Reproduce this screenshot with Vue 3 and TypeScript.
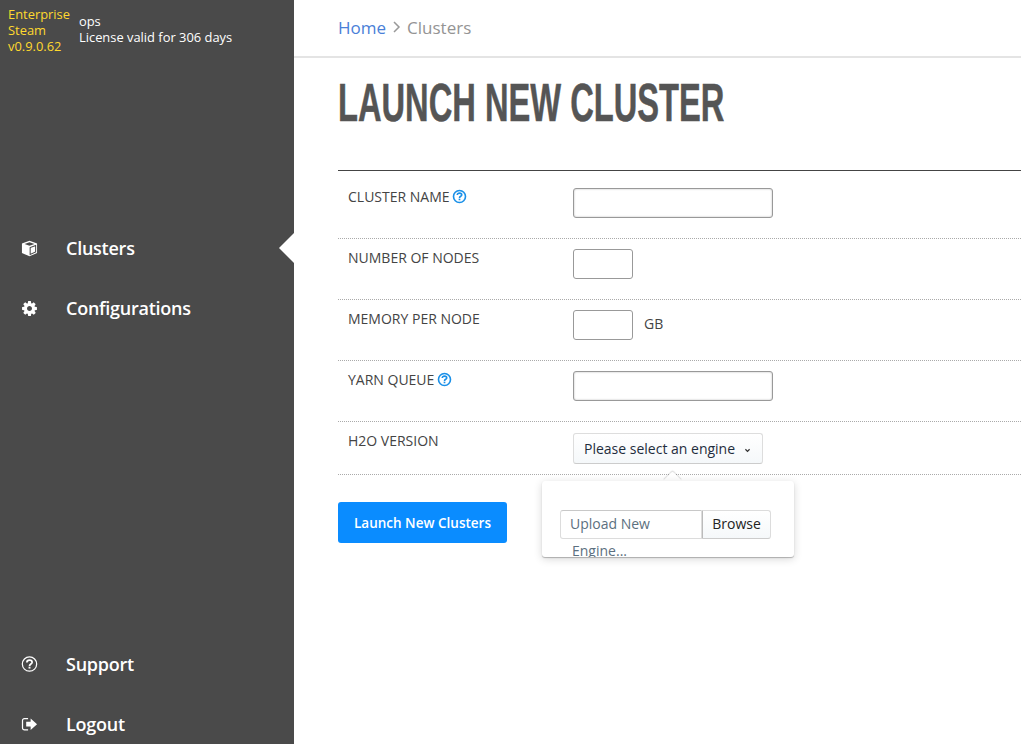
<script setup lang="ts">
interface Row { label: string; help?: boolean; size: 'wide' | 'short'; unit?: string; first?: boolean }
const rows: Row[] = [
  { label: 'CLUSTER NAME', help: true, size: 'wide', first: true },
  { label: 'NUMBER OF NODES', size: 'short' },
  { label: 'MEMORY PER NODE', size: 'short', unit: 'GB' },
  { label: 'YARN QUEUE', help: true, size: 'wide' },
]
</script>

<template>
  <div class="page">
    <aside class="sidebar">
      <div class="brand">
        <div class="product">Enterprise<br />Steam<br />v0.9.0.62</div>
        <div class="license">ops<br />License valid for 306 days</div>
      </div>
      <nav class="nav">
        <a class="nav-item active">
          <svg class="ico" viewBox="0 0 18 18"><path fill="#fff" d="M9 .8 17 3.800V13.700L9 17.300 1 13.700V3.800Z" /><path fill="#4a4a4a" d="M3.800 4.300 9 2.500 14.200 4.300 9 6.200Z" /><path fill="none" stroke="#4a4a4a" stroke-width="1.100" d="M9.700 8V15.200L15.500 12.700V5.800Z" /></svg>
          <span>Clusters</span>
        </a>
        <a class="nav-item">
          <svg class="ico" viewBox="-110 -110 1756 1756"><path fill="#fff" d="M1024 768q0-106-75-181t-181-75-181 75-75 181 75 181 181 75 181-75 75-181zm512-109v222q0 12-8 23t-20 13l-185 28q-19 54-39 91 35 50 107 138 10 12 10 25t-9 23q-27 37-99 108t-94 71q-12 0-26-9l-138-108q-44 23-91 38-16 136-29 186-7 28-36 28h-222q-14 0-24.500-8.500t-11.500-21.500l-28-184q-49-16-90-37l-141 107q-10 9-25 9-14 0-25-11-126-114-165-168-7-10-7-23 0-12 8-23 15-21 51-66.500t54-70.500q-27-50-41-99l-183-27q-13-2-21-12.500t-8-23.500v-222q0-12 8-23t19-13l186-28q14-46 39-92-40-57-107-138-10-12-10-24 0-10 9-23 26-36 98.500-107.500t94.500-71.500q13 0 26 10l138 107q44-23 91-38 16-136 29-186 7-28 36-28h222q14 0 24.500 8.500t11.500 21.500l28 184q49 16 90 37l142-107q9-9 24-9 13 0 25 10 129 119 165 170 7 8 7 22 0 12-8 23-15 21-51 66.500t-54 70.500q26 50 41 98l183 28q13 2 21 12.500t8 23.500z" /></svg>
          <span>Configurations</span>
        </a>
      </nav>
      <div class="nav nav-bottom">
        <a class="nav-item">
          <svg class="ico" viewBox="0 0 18 18"><circle cx="9" cy="8.500" r="7.600" fill="none" stroke="#fff" stroke-width="1.300" /><path fill="none" stroke="#fff" stroke-width="1.800" d="M6.200 6.800C6.200 5.200 7.400 4.300 9 4.300 10.700 4.300 11.800 5.300 11.800 6.600 11.800 8.500 9 8.400 9 10.500" /><rect x="8" y="11.300" width="2" height="2" fill="#fff" /></svg>
          <span>Support</span>
        </a>
        <a class="nav-item">
          <svg class="ico" viewBox="0 0 18 18"><path fill="none" stroke="#fff" stroke-width="1.300" d="M7.500 2.700H3.600A2 2 0 0 0 1.600 4.700V12.700A2 2 0 0 0 3.600 14.700H7.500" /><path fill="#fff" d="M5.500 6.200H10.200V2.600L17 8.700 10.200 14.800V11.200H5.500Z" /></svg>
          <span>Logout</span>
        </a>
      </div>
    </aside>

    <main class="main">
      <div class="crumbs">
        <a class="crumb-link">Home</a>
        <svg class="crumb-sep" viewBox="0 0 8 12"><path fill="none" stroke="#999" stroke-width="1.500" d="M1.500 1 6.500 6 1.500 11" /></svg>
        <span class="crumb-current">Clusters</span>
      </div>
      <div class="content">
        <h1 class="title">LAUNCH NEW CLUSTER</h1>
        <form class="form" @submit.prevent>
          <div v-for="row in rows" :key="row.label" class="row" :class="{ first: row.first }">
            <div class="label">
              {{ row.label }}
              <svg v-if="row.help" class="help" viewBox="0 0 14 14"><circle cx="7" cy="7" r="5.600" fill="none" stroke="#1a90e8" stroke-width="1.500" /><path fill="none" stroke="#1a90e8" stroke-width="1.500" d="M4.900 5.600C4.900 4.400 5.800 3.800 7 3.800 8.300 3.800 9.100 4.500 9.100 5.500 9.100 6.900 7 6.700 7 8.300" /><rect x="6.200" y="9" width="1.600" height="1.500" fill="#1a90e8" /></svg>
            </div>
            <div class="field">
              <input class="input" :class="row.size" type="text" />
              <span v-if="row.unit" class="unit">{{ row.unit }}</span>
            </div>
          </div>
          <div class="row last">
            <div class="label">H2O VERSION</div>
            <div class="field select-field">
              <button class="select" type="button">
                Please select an engine
                <svg class="caret" viewBox="0 0 8 6"><path fill="none" stroke="#333" stroke-width="1.500" d="M1.500 1.500 4 4 6.500 1.500" /></svg>
              </button>
              <div class="popover">
                <span class="notch"></span>
                <div class="pop-body">
                  <div class="upload">
                    <div class="upload-name">Upload New Engine...</div>
                    <div class="browse">Browse</div>
                  </div>
                </div>
              </div>
            </div>
          </div>
          <button class="submit" type="submit">Launch New Clusters</button>
        </form>
      </div>
    </main>
  </div>
</template>

<style>
html, body { margin: 0; padding: 0; background: #fff; overflow: hidden; }
</style>

<style scoped>
.page {
  display: flex;
  height: 744px;
  font-family: "Open Sans", "Liberation Sans", sans-serif;
  color: #444;
  overflow: hidden;
}
.sidebar {
  width: 294px;
  flex: none;
  background: #4a4a4a;
  display: flex;
  flex-direction: column;
  color: #fff;
}
.brand {
  display: flex;
  align-items: flex-start;
  gap: 9px;
  padding: 6px 0 0 8px;
  font-size: 12.900px;
  line-height: 16px;
}
.license { margin-top: 7px; }
.product { color: #ffd92e; }
.nav { margin-top: 164px; display: flex; flex-direction: column; }
.nav-bottom { margin-top: auto; margin-bottom: -10px; }
.nav-item {
  position: relative;
  height: 60px;
  display: flex;
  align-items: center;
  font-size: 18px;
  font-weight: 600;
  padding-left: 21px;
  letter-spacing: -0.250px;
}
.ico { width: 17px; height: 17px; margin-right: 28px; flex: none; }
.active::after {
  content: "";
  position: absolute;
  right: 0;
  top: 15px;
  border: 15px solid transparent;
  border-right-color: #fff;
  border-left-width: 0;
}
.main { flex: 1; min-width: 0; display: flex; flex-direction: column; }
.crumbs {
  height: 58px;
  flex: none;
  box-sizing: border-box;
  border-bottom: 2px solid #e4e4e4;
  padding: 0 0 2px 44px;
  display: flex;
  align-items: center;
  gap: 6px;
  font-size: 17px;
}
.crumb-link { color: #4a80d8; }
.crumb-sep { width: 9px; height: 12px; }
.crumb-current { color: #949494; }
.content { padding-left: 44px; }
.title {
  margin: 0;
  height: 112px;
  box-sizing: border-box;
  padding-top: 13px;
  font-family: "Liberation Sans", sans-serif;
  font-size: 53px;
  line-height: 64px;
  font-weight: 700;
  color: #555;
  white-space: nowrap;
  transform: scaleX(0.616);
  transform-origin: left top;
  -webkit-text-stroke: 0.500px #555;
}
.form { border-top: 1px solid #444; }
.row {
  display: flex;
  height: 61px;
  box-sizing: border-box;
  padding-top: 10px;
  border-bottom: 1px dotted #aaa;
}
.row.first { height: 68px; padding-top: 17px; }
.row.last { height: 53px; padding-top: 11px; }
.label {
  width: 235px;
  flex: none;
  box-sizing: border-box;
  padding-left: 10px;
  margin-top: -1px;
  font-size: 14px;
  line-height: 19px;
  color: #444;
  white-space: nowrap;
}
.row.last .label { margin-top: -2px; }
.help { width: 15px; height: 15px; vertical-align: -2px; margin-left: -1px; }
.field { display: flex; align-items: flex-start; }
.input {
  box-sizing: border-box;
  height: 30px;
  border: 1px solid #999;
  border-radius: 3px;
  background: #fff;
  padding: 0 8px;
  margin: 0;
  outline: none;
}
.input.wide { width: 200px; box-shadow: inset 0 0 2px rgba(0,0,0,0.3); }
.input.short { width: 60px; }
.unit { margin-left: 11px; font-size: 14px; line-height: 28px; color: #444; }
.select-field { position: relative; }
.select {
  box-sizing: border-box;
  width: 190px;
  height: 31px;
  margin: 0;
  padding: 0 0 0 10px;
  text-align: left;
  border: 1px solid #ddd;
  border-bottom-color: #ccc;
  border-radius: 3px;
  background: linear-gradient(#fff, #f5f8fa);
  font: 14px "Open Sans", sans-serif;
  color: #1f2d3d;
  white-space: nowrap;
}
.caret { width: 7px; height: 5px; margin-left: 5px; vertical-align: 1px; }
.popover {
  position: absolute;
  left: -31px;
  top: 48px;
  width: 252px;
  height: 76px;
}
.pop-body {
  position: relative;
  box-sizing: border-box;
  height: 100%;
  padding: 29px 0 0 18px;
  background: #fff;
  border-radius: 3px;
  overflow: hidden;
  box-shadow: 0 1px 1px rgba(0,0,0,0.25), 0 2px 9px rgba(0,0,0,0.16);
}
.notch {
  position: absolute;
  left: 123.500px;
  top: -7.500px;
  width: 13px;
  height: 13px;
  background: #fff;
  border-radius: 2px 0 0 0;
  transform: rotate(45deg);
  box-shadow: -1px -1px 1px rgba(0,0,0,0.12);
}
.upload { display: flex; font-size: 14px; height: 29px; }
.upload-name {
  box-sizing: border-box;
  width: 142px;
  height: 29px;
  padding: 0 40px 0 11px;
  text-indent: -2px;
  line-height: 26.500px;
  border: 1px solid #dcdcdc;
  border-top-color: #c8c8c8;
  border-radius: 3px 0 0 3px;
  color: #5c7080;
}
.browse {
  box-sizing: border-box;
  width: 69px;
  height: 29px;
  line-height: 25px;
  text-align: center;
  border: 1px solid #dcdcdc;
  border-left-color: #bbb;
  border-bottom-color: #ccc;
  border-radius: 0 3px 3px 0;
  background: linear-gradient(#fff, #f5f8fa);
  color: #222;
}
.submit {
  display: block;
  width: 169px;
  height: 41px;
  margin: 27px 0 0;
  padding: 0;
  border: 0;
  border-radius: 3px;
  background: #0a8cff;
  color: #fff;
  font: 600 13.500px "Open Sans", sans-serif;
}
</style>
